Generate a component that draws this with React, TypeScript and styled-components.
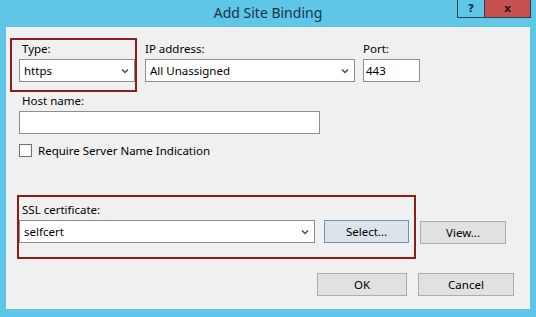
import styled, { createGlobalStyle } from 'styled-components';

const GlobalStyle = createGlobalStyle`
  html, body {
    margin: 0;
    padding: 0;
    background: #5fc6e8;
  }
  * {
    box-sizing: border-box;
  }
`;

const Window = styled.div`
  width: 536px;
  height: 317px;
  background: #5fc6e8;
  display: flex;
  flex-direction: column;
  font-family: 'Noto Sans', 'Open Sans', sans-serif;
  color: #000;
`;

const TitleBar = styled.div`
  height: 28px;
  display: grid;
  grid-template-columns: 1fr auto 1fr;
`;

const Title = styled.div`
  grid-column: 2;
  padding-top: 4px;
  font-size: 14px;
  line-height: 18px;
  color: #1b3346;
`;

const Caption = styled.div`
  grid-column: 3;
  justify-self: end;
  align-self: start;
  display: flex;
  margin-right: 5px;
`;

const CaptionButton = styled.div<{ $close?: boolean }>`
  width: ${({ $close }) => ($close ? '46px' : '28px')};
  height: 18px;
  display: flex;
  align-items: center;
  justify-content: center;
  background: ${({ $close }) => ($close ? '#c75050' : 'transparent')};
  border: 1px solid #2d3f4f;
  border-top: none;
  border-left: ${({ $close }) => ($close ? 'none' : '1px solid #2d3f4f')};
  font-family: 'DejaVu Sans', sans-serif;
  font-weight: bold;
  font-size: 11px;
  color: ${({ $close }) => ($close ? '#2a1414' : '#0f2a44')};
`;

const Client = styled.div`
  flex: 1;
  margin: 0 6px 8px;
  background: #f0f0f0;
  padding: 11px 16px 13px 13px;
  display: flex;
  flex-direction: column;
`;

const Row = styled.div<{ $mt?: number }>`
  display: flex;
  align-items: flex-start;
  margin-top: ${({ $mt }) => $mt ?? 0}px;
`;

const Highlight = styled.div<{ $ml: number; $pad: string }>`
  display: flex;
  align-items: flex-end;
  margin-left: ${({ $ml }) => $ml}px;
  padding: ${({ $pad }) => $pad};
  border: 2px solid #8c1d1d;
`;

const Field = styled.div<{ $mt?: number; $ml?: number }>`
  display: flex;
  flex-direction: column;
  margin-top: ${({ $mt }) => $mt ?? 0}px;
  margin-left: ${({ $ml }) => $ml ?? 0}px;
`;

const Label = styled.div<{ $inset?: number }>`
  font-size: 11.5px;
  line-height: 16px;
  margin-bottom: 2px;
  padding-left: ${({ $inset }) => $inset ?? 3}px;
`;

const SelectBox = styled.div<{ $w: number }>`
  width: ${({ $w }) => $w}px;
  height: 23px;
  background: #fff;
  border: 1px solid #8e8e8e;
  display: flex;
  align-items: center;
  justify-content: space-between;
  padding: 0 5px 0 4px;
  font-size: 11.5px;

  svg {
    width: 8px;
    height: 6px;
  }
`;

const TextInput = styled.input<{ $w: number }>`
  width: ${({ $w }) => $w}px;
  height: 23px;
  background: #fff;
  border: 1px solid #8e8e8e;
  border-radius: 0;
  padding: 0 2px;
  margin: 0;
  font-family: 'Noto Sans', 'Open Sans', sans-serif;
  font-size: 11.5px;
  color: #000;
  outline: none;
`;

const CheckRow = styled.label`
  display: flex;
  align-items: center;
  gap: 6px;
  margin-top: 10px;
  font-size: 11.5px;
  line-height: 13px;
`;

const CheckBox = styled.span`
  width: 13px;
  height: 13px;
  background: #fff;
  border: 1px solid #707070;
`;

const Button = styled.div<{ $w: number; $ml?: number; $mt?: number; $default?: boolean }>`
  width: ${({ $w }) => $w}px;
  height: 23px;
  margin-left: ${({ $ml }) => $ml ?? 0}px;
  margin-top: ${({ $mt }) => $mt ?? 0}px;
  display: flex;
  align-items: center;
  justify-content: center;
  background: ${({ $default }) => ($default ? '#dce3e9' : '#e1e1e1')};
  border: 1px solid ${({ $default }) => ($default ? '#6e93b8' : '#adadad')};
  font-size: 11.5px;
  color: #000;
`;

const Footer = styled.div`
  display: flex;
  justify-content: flex-end;
  gap: 11px;
  margin-top: 14px;
`;

const Chevron = () => (
  <svg viewBox="0 0 8 6">
    <path d="M1 1.5 L4 4.5 L7 1.5" fill="none" stroke="#4d4d4d" strokeWidth="1.5" />
  </svg>
);

export default function App() {
  return (
    <>
      <GlobalStyle />
      <Window>
        <TitleBar>
          <Title>Add Site Binding</Title>
          <Caption>
            <CaptionButton>?</CaptionButton>
            <CaptionButton $close>x</CaptionButton>
          </Caption>
        </TitleBar>

        <Client>
          <Row>
            <Highlight $ml={-9} $pad="1px 0 8px 7px">
              <Field>
                <Label>Type:</Label>
                <SelectBox $w={116}>
                  <span>https</span>
                  <Chevron />
                </SelectBox>
              </Field>
            </Highlight>
            <Field $mt={3} $ml={8}>
              <Label $inset={0}>IP address:</Label>
              <SelectBox $w={210}>
                <span>All Unassigned</span>
                <Chevron />
              </SelectBox>
            </Field>
            <Field $mt={3} $ml={8}>
              <Label $inset={0}>Port:</Label>
              <TextInput $w={57} defaultValue="443" />
            </Field>
          </Row>

          <Field $mt={1}>
            <Label>Host name:</Label>
            <TextInput $w={301} defaultValue="" />
          </Field>

          <CheckRow>
            <CheckBox />
            Require Server Name Indication
          </CheckRow>

          <Row $mt={38}>
            <Highlight $ml={-2} $pad="5px 5px 14px 0">
              <Field>
                <Label>SSL certificate:</Label>
                <SelectBox $w={296}>
                  <span>selfcert</span>
                  <Chevron />
                </SelectBox>
              </Field>
              <Button $w={85} $ml={9} $default>
                Select...
              </Button>
            </Highlight>
            <Button $w={86} $ml={4} $mt={26}>
              View...
            </Button>
          </Row>

          <Footer>
            <Button $w={90}>OK</Button>
            <Button $w={96}>Cancel</Button>
          </Footer>
        </Client>
      </Window>
    </>
  );
}
